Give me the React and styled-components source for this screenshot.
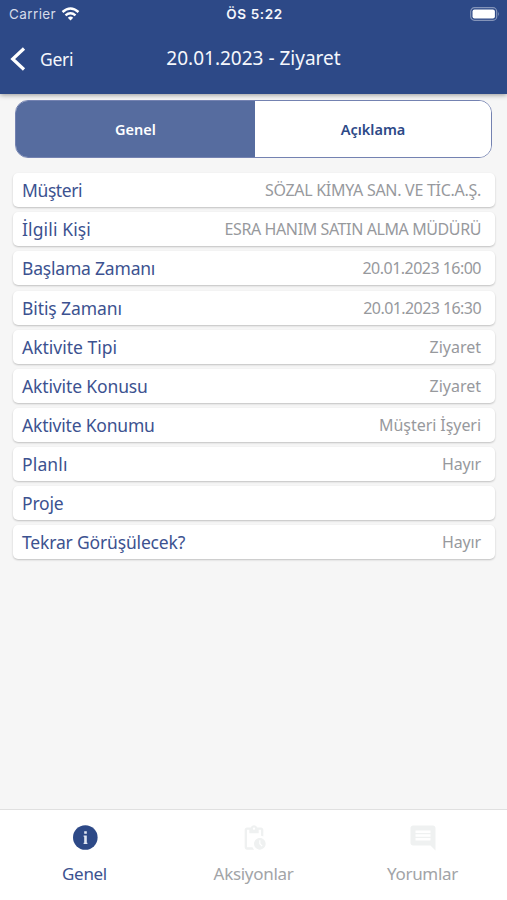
import styled, { createGlobalStyle } from "styled-components";
import { MdComment, MdPendingActions } from "react-icons/md";

const GlobalStyle = createGlobalStyle`
    * {
        box-sizing: border-box;
    }
    body {
        margin: 0;
        background: #f6f6f6;
        font-family: "Noto Sans", "Open Sans", sans-serif;
    }
`;

const Screen = styled.div`
    height: 900px;
    display: flex;
    flex-direction: column;
    background: #f6f6f6;
    overflow: hidden;
    white-space: nowrap;
`;

const Header = styled.header`
    height: 94px;
    flex: none;
    background: #2d4987;
    color: #f5f7fc;
    box-shadow: 0 1px 5px rgba(0, 0, 0, .4);
`;

const StatusBar = styled.div`
    height: 27px;
    display: grid;
    grid-template-columns: 1fr auto 1fr;
    align-items: center;
    padding: 0 7px 0 9px;
    font-family: Inter, sans-serif;
`;

const Carrier = styled.div`
    display: flex;
    align-items: center;
    gap: 5px;
    color: #d5dbe9;
    font-size: 13.5px;
    letter-spacing: .4px;
`;

const Clock = styled.div`
    font-size: 13.5px;
    font-weight: 600;
    letter-spacing: .6px;
`;

const Battery = styled.svg`
    justify-self: end;
`;

const NavBar = styled.div`
    height: 64px;
    display: grid;
    grid-template-columns: 1fr auto 1fr;
    align-items: center;
    padding: 0 10px;
`;

const BackButton = styled.button`
    display: flex;
    align-items: center;
    gap: 14px;
    padding: 0;
    border: none;
    background: none;
    color: inherit;
    font-family: inherit;
    font-size: 17.5px;
    letter-spacing: -.3px;
`;

const Title = styled.h1`
    margin: 0;
    padding-bottom: 2px;
    font-size: 19px;
    font-weight: 400;
`;

const Segments = styled.div`
    height: 58px;
    flex: none;
    display: flex;
    margin: 6px 15px 0;
    border: 1px solid #7482b1;
    border-radius: 13px;
    background: #fff;
    overflow: hidden;
`;

const Segment = styled.button`
    flex: ${({ $active }) => ($active ? "0 0 239px" : "1")};
    padding: 0;
    border: none;
    background: ${({ $active }) => ($active ? "#566c9f" : "#fff")};
    color: ${({ $active }) => ($active ? "#fff" : "#2d4987")};
    font-family: inherit;
    font-size: 14.5px;
    font-weight: 600;
`;

const List = styled.dl`
    flex: 1;
    display: flex;
    flex-direction: column;
    gap: 5.15px;
    margin: 15.2px 12px 0 13px;
`;

const Row = styled.div`
    height: 34px;
    flex: none;
    display: flex;
    align-items: center;
    justify-content: space-between;
    padding: 0 14px 0 9px;
    border-radius: 5px;
    background: #fff;
    box-shadow: 0 1px 2px rgba(0, 0, 0, .22);
`;

const Label = styled.dt`
    color: #3c5290;
    font-size: 17.5px;
    letter-spacing: ${({ $spacing = 0 }) => $spacing}px;
`;

const Value = styled.dd`
    margin: 0;
    color: #97999d;
    font-size: 16px;
    letter-spacing: ${({ $spacing = 0 }) => $spacing}px;
`;

const TabBar = styled.nav`
    height: 91px;
    flex: none;
    display: flex;
    border-top: 1px solid #e0e0e0;
    background: #fff;
`;

const Tab = styled.button`
    flex: 1;
    display: flex;
    flex-direction: column;
    align-items: center;
    gap: 11px;
    padding: 14px 0 0;
    border: none;
    background: none;
    color: ${({ $active }) => ($active ? "#3c5290" : "#a2a4a7")};
    font-family: inherit;
    font-size: 17px;
    line-height: 24px;
    letter-spacing: -.3px;
`;

const TabIcon = styled.span`
    height: 27px;
    display: flex;
    align-items: center;
    color: ${({ $active }) => ($active ? "#2d4987" : "#eff1f1")};
`;

const WifiIcon = () => (
    <svg width="19" height="14" viewBox="0 0 18 14" fill="none" stroke="#fff" strokeWidth="2.4">
        <path d="M1 5 Q9 -2.2 17 5" />
        <path d="M4 8.3 Q9 4 14 8.3" />
        <path d="M6.3 10.7 Q9 8.4 11.7 10.7 L9 13.6 Z" fill="#fff" stroke="none" />
    </svg>
);

const BatteryIcon = () => (
    <Battery width="30" height="14" viewBox="0 0 30 14">
        <rect x=".7" y=".7" width="26" height="12.6" rx="3.8" fill="none" stroke="#8494b9" strokeWidth="1.2" />
        <rect x="2.5" y="2.5" width="22.4" height="9" rx="2" fill="#fff" />
        <path d="M28.2 4.7 Q30 7 28.2 9.3 Z" fill="#8494b9" />
    </Battery>
);

const BackIcon = () => (
    <svg width="16" height="24" viewBox="0 0 16 24" fill="none" stroke="#fff" strokeWidth="3.2">
        <path d="M14 1.5 L2.7 12 L14 22.5" />
    </svg>
);

const InfoIcon = () => (
    <svg width="26" height="27" viewBox="0 0 26 27">
        <circle cx="13.3" cy="13.5" r="12.3" fill="currentColor" />
        <path d="M12.2 7.3h2.6v2.5h-2.6z M11.6 11.5h3.2v7.2h.6v1.3h-3.8v-1.3h.6v-5.9h-.6z" fill="#dfe5f2" />
    </svg>
);

const rows = [
    { label: "Müşteri", labelSpacing: -.4, value: "SÖZAL KİMYA SAN. VE TİC.A.Ş.", valueSpacing: -.28 },
    { label: "İlgili Kişi", labelSpacing: .13, value: "ESRA HANIM SATIN ALMA MÜDÜRÜ", valueSpacing: -.4 },
    { label: "Başlama Zamanı", labelSpacing: -.2, value: "20.01.2023 16:00", valueSpacing: -.52 },
    { label: "Bitiş Zamanı", labelSpacing: -.1, value: "20.01.2023 16:30", valueSpacing: -.57 },
    { label: "Aktivite Tipi", value: "Ziyaret" },
    { label: "Aktivite Konusu", labelSpacing: -.13, value: "Ziyaret" },
    { label: "Aktivite Konumu", labelSpacing: -.2, value: "Müşteri İşyeri", valueSpacing: -.06 },
    { label: "Planlı", labelSpacing: .15, value: "Hayır", valueSpacing: -.15 },
    { label: "Proje", labelSpacing: -.2, value: "" },
    { label: "Tekrar Görüşülecek?", labelSpacing: -.17, value: "Hayır", valueSpacing: -.15 },
];

export default function App() {
    return (
        <Screen>
            <GlobalStyle />
            <Header>
                <StatusBar>
                    <Carrier>Carrier <WifiIcon /></Carrier>
                    <Clock>ÖS 5:22</Clock>
                    <BatteryIcon />
                </StatusBar>
                <NavBar>
                    <BackButton><BackIcon />Geri</BackButton>
                    <Title>20.01.2023 - Ziyaret</Title>
                </NavBar>
            </Header>
            <Segments>
                <Segment $active>Genel</Segment>
                <Segment>Açıklama</Segment>
            </Segments>
            <List>
                {rows.map(({ label, value, labelSpacing, valueSpacing }) => (
                    <Row key={label}>
                        <Label $spacing={labelSpacing}>{label}</Label>
                        <Value $spacing={valueSpacing}>{value}</Value>
                    </Row>
                ))}
            </List>
            <TabBar>
                <Tab $active>
                    <TabIcon $active><InfoIcon /></TabIcon>
                    Genel
                </Tab>
                <Tab>
                    <TabIcon><MdPendingActions size={28} /></TabIcon>
                    Aksiyonlar
                </Tab>
                <Tab>
                    <TabIcon><MdComment size={30} /></TabIcon>
                    Yorumlar
                </Tab>
            </TabBar>
        </Screen>
    );
}
